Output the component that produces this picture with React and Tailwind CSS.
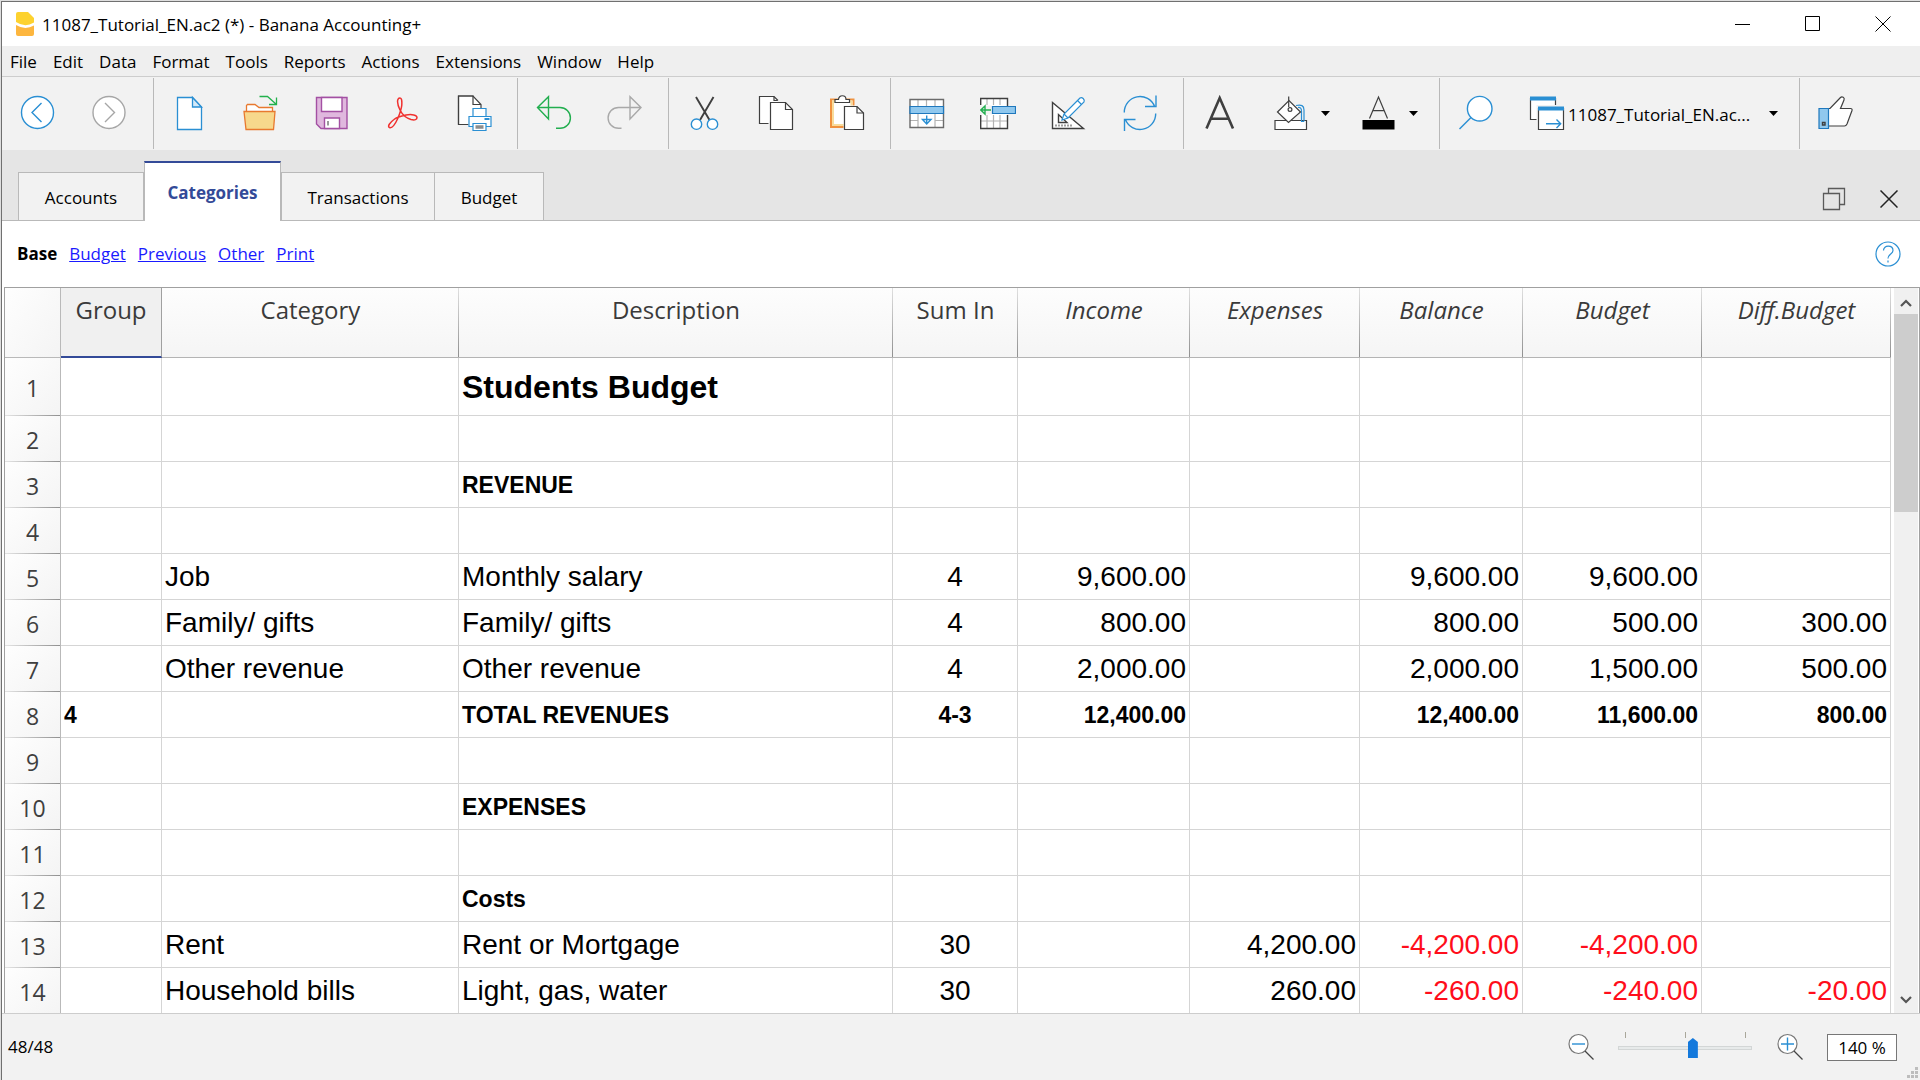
import React from "react";

const BLUE = "#2a8fd3";
const DARK = "#3f3f3f";

function Icon({ children, stroke = DARK, width = 1.2 }) {
  return (
    <svg viewBox="0 0 36 36" className="size-9 shrink-0" fill="none" stroke={stroke} strokeWidth={width} aria-hidden="true">
      {children}
    </svg>
  );
}

const BackIcon = () => (
  <Icon stroke={BLUE} width={1.4}>
    <circle cx="17.5" cy="17.5" r="16" fill="#fff" />
    <path d="M21.5 8 12 17.5 21.5 27" />
  </Icon>
);
const ForwardIcon = () => (
  <Icon stroke="#a6a6a6" width={1.4}>
    <circle cx="18" cy="17.5" r="16" fill="#fff" />
    <path d="M14 8 23.5 17.5 14 27" />
  </Icon>
);
const NewIcon = () => (
  <Icon stroke={BLUE} width={1.3}>
    <path d="M5.5 2.5H20.5L29.5 12V34.5H5.5Z" fill="#fff" />
    <path d="M20.5 2.5V12H29.5Z" fill="#d3e9f8" />
  </Icon>
);
const OpenIcon = () => (
  <Icon stroke="#e8792f" width={1.3}>
    <path d="M3.5 17V10.5L4.5 9.5H12L16 12.5H29.5V17" fill="#fff" />
    <path d="M1 16.5H32L30.5 34.5H3Z" fill="#f7d88c" />
    <path d="M16.5 1.5H24.5L33.5 9.5M33.5 2.5V9.5H26" stroke="#22b14c" />
  </Icon>
);
const SaveIcon = () => (
  <Icon stroke="#a350a3" width={1.4}>
    <path d="M2.5 2.5H33V33.5H7L2.5 29Z" fill="#e0b8de" />
    <path d="M7.5 2.5H28V16.5H7.5Z" fill="#fff" />
    <path d="M10.5 23H25.5V33.5H10.5Z" fill="#fff" />
    <path d="M14 26V30.5" stroke="#9a9a9a" strokeWidth="2" />
  </Icon>
);
const PdfIcon = () => (
  <Icon stroke="#f0312f" width={1.5}>
    <path d="M15 3c-3.500 0-3 6 0 12c2 4 6 8 11 9.500c4 1 6 0 6-2c0-2.500-5-3.500-11-2.500c-5 1-9 2-12 4.500c-4 3-7 7-4.500 8c2.500 1 6-4 8.500-9.500c2-5 3.500-9 3.800-13c.2-4 0-7-1.800-7z" />
  </Icon>
);
const PrintIcon = () => (
  <Icon>
    <path d="M25 14V9.500L17 1H2.500V29.500H12.500" fill="#fff" />
    <path d="M2.500 29.500V1H17V9.500H25" fill="none" />
    <g stroke={BLUE} fill="#fff">
      <path d="M17 13.500H30V21.500H17Z" />
      <path d="M13 21.500H35V31.500H13Z" />
      <path d="M28.500 24H33.500" strokeWidth="2" />
      <path d="M17 28.500H30V35.500H17Z" />
    </g>
    <path d="M19.500 32H27.500" stroke="#8d8d8d" strokeWidth="3.500" />
  </Icon>
);
const UndoIcon = () => (
  <Icon stroke="#22ae4f" width={1.4}>
    <path d="M1.500 12.500 12.500 1.700V24ZM1.500 12.500H24a10.400 10.400 0 0 1 0 20.800h-4" />
  </Icon>
);
const RedoIcon = () => (
  <Icon stroke="#a9a9a9" width={1.4}>
    <path d="M34 12.500 23 1.700V24ZM34 12.500H11.500a10.400 10.400 0 0 0 0 20.800h3" />
  </Icon>
);
const CutIcon = () => (
  <Icon>
    <path d="M9 2 22.500 25M26.500 2 13 25" strokeWidth="1.900" />
    <g stroke={BLUE} strokeWidth="1.400" fill="#fff">
      <circle cx="9.500" cy="29.200" r="5.200" />
      <circle cx="25.500" cy="29.200" r="5.200" />
    </g>
  </Icon>
);
const CopyIcon = () => (
  <Icon>
    <path d="M10.500 28.500H1.500V1.500H16L20 5.500" fill="#fff" />
    <path d="M16 1.500V5.500H19.500" />
    <path d="M12.500 7.500H27.500L34.500 14.500V34.500H12.500Z" fill="#fff" />
    <path d="M27.500 7.500V14.500H34.500" />
  </Icon>
);
const PasteIcon = () => (
  <Icon>
    <path d="M2 4.500H24.500V32H2Z" fill="#fff" stroke="#f0923f" strokeWidth="2" />
    <path d="M4 6.500H22.500V30H4Z" stroke="#f8dc9c" strokeWidth="2" />
    <path d="M6 7.500V4.500H9.500C9.500-.500 17-.500 17 4.500H20.500V7.500Z" fill="#fff" />
    <path d="M14.500 10.500H30V36H14.500Z" fill="#f2f2f2" stroke="none" />
    <path d="M15.500 11.500H28L34.500 18V34.500H15.500Z" fill="#fff" />
    <path d="M28 11.500V18H34.500" />
  </Icon>
);
const AddRowIcon = () => (
  <Icon>
    <path d="M1 4.500H34.500V32.500H1Z" fill="#fff" stroke="none" />
    <path d="M9 5V11M17.500 5V11M26 5V11M9 19V32M26 19V32M1 25.500H9M26 25.500H34" stroke="#b3b3b3" />
    <path d="M1 4.500H34.500V32.500H1Z" stroke="#6b6b6b" strokeWidth="1.400" />
    <path d="M1 11.500H34.500V18.500H1Z" fill="#90c8ee" stroke="#1f78bd" />
    <path d="M17.700 20.500V29M13.500 24.500 17.700 29 22 24.500Z" stroke={BLUE} strokeWidth="1.400" />
  </Icon>
);
const MoveCellIcon = () => (
  <Icon>
    <path d="M.700 3.500H27.500V33.500H.700Z" fill="#fff" stroke="none" />
    <path d="M7 4V10M13.500 4V10M20 4V10M7 20V33M13.500 20V33M20 20V33M1 26H27" stroke="#b3b3b3" />
    <path d="M.700 10V3.500H27.500V11M.700 20V33.500H27.500V20" strokeWidth="1.400" />
    <path d="M0 10.500H12V19.500H0Z" fill="#f2f2f2" stroke="none" />
    <path d="M12.500 11.500H35.500V18.500H12.500Z" fill="#90c8ee" stroke="#1f78bd" />
    <path d="M.800 15H11M5 11 .800 15 5 19Z" stroke="#22ae4f" strokeWidth="1.400" />
  </Icon>
);
const DesignIcon = () => (
  <Icon>
    <path d="M1.500 7.500V33.500H32.500Z" fill="#fff" strokeWidth="1.400" />
    <path d="M7.500 19.500V27.500H16Z" strokeWidth="1.400" />
    <path d="M4.500 30.500H22.500" strokeWidth="2" strokeDasharray="1 2" />
    <g stroke={BLUE} fill="#fff">
      <path d="M11 25 13 19 29 3Q30.500 1.800 32.200 3.500T33 7L17 23Z" />
      <path d="M13 19 17 23M26.500 5.500 30.500 9.500" />
    </g>
  </Icon>
);
const RefreshIcon = () => (
  <Icon stroke={BLUE} width={1.4}>
    <path d="M2.300 17.500A15.700 15.700 0 0 1 32.600 11.500M34 .500V11.500H23" />
    <path d="M33.700 18.500A15.700 15.700 0 0 1 3.400 24.500M2.500 36V24.500H13.500" />
  </Icon>
);
const FontIcon = () => (
  <Icon width={2.6}>
    <path d="M4.500 33.500 17.700 3 31 33.500M9 23.700H26.500" />
  </Icon>
);
const FillIcon = () => (
  <Icon>
    <path d="M2 25.500H33.500V34.500H2Z" fill="#fff" />
    <path d="M23 10.500Q31 8.500 31 15V26.500M25 12.500Q28.500 12 28.500 16V26.500H31" stroke={BLUE} />
    <path d="M4.500 17 16 5.500 27.500 17 15.500 27.500Z" fill="#fff" />
    <path d="M15.700 1.500V12" />
    <circle cx="17" cy="14.500" r="1.900" />
  </Icon>
);
const TextColorIcon = () => (
  <Icon>
    <path d="M8.500 23.500 17.500 2 26.500 23.500M11.500 15.700H23.500" />
    <path d="M1.500 25H33.500V34.500H1.500Z" fill="#000" stroke="none" />
  </Icon>
);
const SearchIcon = () => (
  <Icon stroke={BLUE} width={1.4}>
    <circle cx="21.700" cy="13.700" r="12.300" fill="#fff" />
    <path d="M13 22.500 1.500 34" />
  </Icon>
);
const WindowsIcon = () => (
  <Icon>
    <path d="M1.500 3.500H26.500V24.500H1.500Z" fill="#fff" />
    <path d="M1 3.500H27" stroke={BLUE} strokeWidth="4" />
    <path d="M7.500 10H36V36H7.500Z" fill="#f2f2f2" stroke="none" />
    <path d="M9.500 13.500H34.500V34.500H9.500Z" fill="#fff" />
    <path d="M9 13.500H35" stroke={BLUE} strokeWidth="4" />
    <path d="M17 28.700H31.500M27.500 24.500 31.700 28.700 27.500 33" stroke={BLUE} strokeWidth="1.400" />
  </Icon>
);
const ThumbIcon = () => (
  <Icon>
    <path d="M10 13.500H12L22.500 2.500C24 1 27 2.500 26 5L22.500 13.500H32.500Q34.500 13.500 34 15.500L29 29Q28 31 26.500 31H10Z" fill="#fff" />
    <path d="M1 13.500H10.500V33.500H1Z" fill="#90c8ee" stroke="#1f78bd" />
    <path d="M4.500 27.500H7V30H4.500Z" strokeWidth="1.400" />
  </Icon>
);

const Caret = () => (
  <svg viewBox="0 0 9 5" className="h-[5px] w-[9px] shrink-0" aria-hidden="true">
    <path d="M0 0H9L4.500 5Z" fill="#000" />
  </svg>
);

const toolGroups = [
  [["Back", BackIcon], ["Forward", ForwardIcon]],
  [["New", NewIcon], ["Open", OpenIcon], ["Save", SaveIcon], ["Export PDF", PdfIcon], ["Print", PrintIcon]],
  [["Undo", UndoIcon], ["Redo", RedoIcon]],
  [["Cut", CutIcon], ["Copy", CopyIcon], ["Paste", PasteIcon]],
  [["Add rows", AddRowIcon], ["Insert cells", MoveCellIcon], ["Design", DesignIcon], ["Recalculate", RefreshIcon]],
  [["Font", FontIcon], ["Fill colour", FillIcon, true], ["Text colour", TextColorIcon, true]],
];

const menus = ["File", "Edit", "Data", "Format", "Tools", "Reports", "Actions", "Extensions", "Window", "Help"];

const columns = [
  ["", "w-[56px]"],
  ["Group", "w-[101px]"],
  ["Category", "w-[297px]"],
  ["Description", "w-[434px]"],
  ["Sum In", "w-[125px]"],
  ["Income", "w-[172px]"],
  ["Expenses", "w-[170px]"],
  ["Balance", "w-[163px]"],
  ["Budget", "w-[179px]"],
  ["Diff.Budget", "w-[189px]"],
];

const rows = [
  { kind: "title", cells: ["", "", "Students Budget"] },
  { cells: [] },
  { kind: "bold", cells: ["", "", "REVENUE"] },
  { cells: [] },
  { cells: ["", "Job", "Monthly salary", "4", "9,600.00", "", "9,600.00", "9,600.00", ""] },
  { cells: ["", "Family/ gifts", "Family/ gifts", "4", "800.00", "", "800.00", "500.00", "300.00"] },
  { cells: ["", "Other revenue", "Other revenue", "4", "2,000.00", "", "2,000.00", "1,500.00", "500.00"] },
  { kind: "bold", cells: ["4", "", "TOTAL REVENUES", "4-3", "12,400.00", "", "12,400.00", "11,600.00", "800.00"] },
  { cells: [] },
  { kind: "bold", cells: ["", "", "EXPENSES"] },
  { cells: [] },
  { kind: "bold", cells: ["", "", "Costs"] },
  { cells: ["", "Rent", "Rent or Mortgage", "30", "", "4,200.00", "-4,200.00", "-4,200.00", ""] },
  { cells: ["", "Household bills", "Light, gas, water", "30", "", "260.00", "-260.00", "-240.00", "-20.00"] },
];

const kindClass = {
  title: "h-[58px] text-[32px] font-bold",
  bold: "h-[46px] text-[23px] font-bold",
  normal: "h-[46px] text-[28px]",
};

function alignOf(i) {
  if (i < 3) return "text-left";
  return i === 3 ? "text-center" : "text-right";
}

function TitleBar() {
  return (
    <header className="flex h-11 shrink-0 items-center bg-white pr-0.5 pl-[14px]">
      <svg viewBox="0 0 18 24" className="h-6 w-[18px]" aria-hidden="true">
        <path d="M2 0H12L18 6V10.500Q9 16 0 10V2Q0 0 2 0Z" fill="#fdd22f" />
        <path d="M0 13Q9 18.500 18 13.500V22Q18 24 16 24H2Q0 24 0 22Z" fill="#fdb63e" />
      </svg>
      <h1 className="ml-2 flex-1 pt-px text-[17px] text-black">11087_Tutorial_EN.ac2 (*) - Banana Accounting+</h1>
      <div className="flex h-full">
        <button aria-label="Minimize" className="flex w-[70px] items-center justify-center">
          <svg viewBox="0 0 16 16" className="size-4" stroke="#000"><path d="M0 8.500H15" /></svg>
        </button>
        <button aria-label="Maximize" className="flex w-[70px] items-center justify-center">
          <svg viewBox="0 0 16 16" className="size-4" stroke="#000" fill="none"><path d="M.500 .500H14.500V14.500H.500Z" /></svg>
        </button>
        <button aria-label="Close" className="flex w-[70px] items-center justify-center">
          <svg viewBox="0 0 16 16" className="size-4" stroke="#000"><path d="M.500 .500 15.500 15.500M15.500 .500 .500 15.500" /></svg>
        </button>
      </div>
    </header>
  );
}

function Toolbar() {
  return (
    <div role="toolbar" className="flex h-[74px] shrink-0 border-t border-[#cdcdcd] bg-[#f2f2f2] pt-px pb-px">
      {toolGroups.map((group, g) => (
        <div key={g} className="flex border-r border-[#b9b9b9] pr-2 first:pr-[9px]">
          {group.map(([label, Glyph, caret]) => (
            <button
              key={label}
              aria-label={label}
              className={caret ? "flex w-[88px] items-center gap-3 pl-[18px] pb-px" : "flex w-[71px] items-center justify-center pb-px"}
            >
              <Glyph />
              {caret && <Caret />}
            </button>
          ))}
        </div>
      ))}
      <div className="flex border-r border-[#b9b9b9] pr-2">
        <button aria-label="Search" className="flex w-[71px] items-center justify-center pb-px"><SearchIcon /></button>
        <button className="flex w-[280px] items-center gap-[3px] pr-[13px] pb-px pl-[18px] text-left text-[17px]">
          <WindowsIcon />
          <span className="flex-1 pt-1">11087_Tutorial_EN.ac...</span>
          <Caret />
        </button>
      </div>
      <button aria-label="Feedback" className="flex w-[71px] items-center justify-center pb-px"><ThumbIcon /></button>
    </div>
  );
}

function Tabs() {
  const tab = "h-[49px] border border-[#b9b9b9] bg-[#f2f2f2] pb-[2px] text-[17px] pt-[4px]";
  return (
    <div className="flex h-[71px] shrink-0 items-end border-b border-[#b9b9b9] bg-[#e5e5e5] pr-[22px] pl-4">
      <div role="tablist" className="-mb-px flex flex-1 items-end">
        <button role="tab" className={`${tab} w-[126px]`}>Accounts</button>
        <button role="tab" aria-selected="true" className="h-[60px] w-[137px] border-x border-t-2 border-x-[#b9b9b9] border-t-[#334a98] bg-white pb-[2px] pt-[4px] text-[17px] font-bold text-[#334a98]">
          Categories
        </button>
        <button role="tab" className={`${tab} w-[154px]`}>Transactions</button>
        <button role="tab" className={`${tab} w-[109px] border-l-0`}>Budget</button>
      </div>
      <div className="flex items-center gap-[34px] pb-[9px]">
        <button aria-label="Restore window">
          <svg viewBox="0 0 24 24" className="size-6" fill="none" stroke="#5a5a5a" strokeWidth="1.300">
            <path d="M6.500 6V1.500H22.500V17.500H18" />
            <path d="M1.500 6.500H17.500V22.500H1.500Z" />
          </svg>
        </button>
        <button aria-label="Close table">
          <svg viewBox="0 0 18 18" className="size-[18px]" stroke="#222" strokeWidth="1.500"><path d="M.500 .500 17.500 17.500M17.500 .500 .500 17.500" /></svg>
        </button>
      </div>
    </div>
  );
}

function Grid() {
  return (
    <div className="ml-0.5 flex min-h-0 flex-1 overflow-hidden border-t border-r border-l border-[#a0a0a0] bg-white">
      <div className="min-w-0 flex-1 overflow-hidden pr-[3px]">
        <table id="grid" className="w-full table-fixed border-separate border-spacing-0">
          <thead>
            <tr className="h-[70px] text-[24px] leading-8 text-[#3a3a3a]">
              {columns.map(([name, width], i) => {
                const base = `${width} pt-1.5 align-top font-normal whitespace-nowrap`;
                if (i === 0)
                  return <th key={i} aria-label="Row" className={`${base} border-r border-b border-[#b9b9b9] bg-linear-to-br from-[#fefefe] to-[#f4f4f4]`} />;
                if (i === 1)
                  return <th key={i} className={`${base} border-r border-b-2 border-r-[#a0a0a0] border-b-[#334a98] bg-[#f0f0f0]`}>{name}</th>;
                return (
                  <th
                    key={i}
                    className={`${base} ${i > 4 ? "italic" : ""} border-b border-[#b4b4b4] bg-[linear-gradient(to_bottom,#e0e0e0,#909090),linear-gradient(to_bottom,#fdfdfd,#f5f5f5)] bg-[length:1px_100%,100%_100%] bg-[position:right,left] bg-no-repeat`}
                  >
                    {name}
                  </th>
                );
              })}
            </tr>
          </thead>
          <tbody className="text-black">
            {rows.map((row, r) => (
              <tr key={r} className={kindClass[row.kind || "normal"]}>
                <th
                  scope="row"
                  className="h-[46px] border-r border-[#b9b9b9] bg-[linear-gradient(to_right,#e4e4e4,#909090),linear-gradient(to_bottom_right,#fefefe,#f4f4f4)] bg-[length:100%_1px,100%_100%] bg-[position:bottom,left] bg-no-repeat pt-0.5 text-[23px] leading-8 font-normal text-[#3f3f3f]"
                >
                  {r + 1}
                </th>
                {columns.slice(1).map((_, c) => {
                  const value = row.cells[c] || "";
                  return (
                    <td
                      key={c}
                      className={`border-r border-b border-[#d5d5d5] px-[3px] py-0 font-[Liberation_Sans,Arial,sans-serif] leading-9 whitespace-nowrap ${alignOf(c)} ${value.startsWith("-") ? "text-[#ff0d1b]" : ""}`}
                    >
                      {value}
                    </td>
                  );
                })}
              </tr>
            ))}
          </tbody>
        </table>
      </div>
      <div role="scrollbar" aria-controls="grid" aria-valuenow={0} className="mr-px flex w-6 flex-col bg-[#f0f0f0]">
        <button aria-label="Scroll up" className="flex h-[26px] shrink-0 items-center justify-center">
          <svg viewBox="0 0 12 8" className="mt-1 h-2 w-3" fill="none" stroke="#555" strokeWidth="2.200"><path d="M1 7 6 2 11 7" /></svg>
        </button>
        <div className="h-[198px] bg-[#cdcdcd]" />
        <div className="flex-1" />
        <button aria-label="Scroll down" className="flex h-[26px] shrink-0 items-center justify-center">
          <svg viewBox="0 0 12 8" className="h-2 w-3" fill="none" stroke="#555" strokeWidth="2.200"><path d="M1 1 6 6 11 1" /></svg>
        </button>
      </div>
    </div>
  );
}

function ZoomGlyph({ plus }) {
  return (
    <svg viewBox="0 0 26 28" className="h-7 w-[26px]" fill="none" stroke="#777" strokeWidth="1.200" aria-hidden="true">
      <circle cx="10.500" cy="11" r="9.500" fill="#fff" />
      <path d="M17 18 25.500 26.500" stroke="#444" />
      <path d={plus ? "M4 11H17M10.500 4.500V17.500" : "M4 11H17"} stroke={BLUE} strokeWidth="1.400" />
    </svg>
  );
}

function StatusBar() {
  return (
    <footer className="relative flex h-[67px] shrink-0 items-center border-t border-[#cdcdcd] bg-[#f2f2f2] pr-[23px] pl-1.5 text-[17px] text-black">
      <span className="flex-1">48/48</span>
      <button aria-label="Zoom out"><ZoomGlyph /></button>
      <div className="mr-[25px] ml-6 flex w-[134px] flex-col pb-1">
        <div className="flex h-1.5 justify-between pr-1.5 pl-[7px]">
          <i className="w-px bg-[#a9a79a]" />
          <i className="w-px bg-[#a9a79a]" />
          <i className="w-px bg-[#a9a79a]" />
        </div>
        <input
          type="range"
          min="0"
          max="248"
          defaultValue="140"
          aria-label="Zoom"
          className="block h-5 w-full appearance-none bg-transparent [&::-webkit-slider-runnable-track]:h-1 [&::-webkit-slider-runnable-track]:border [&::-webkit-slider-runnable-track]:border-[#d3d6d6] [&::-webkit-slider-runnable-track]:bg-[#e7eaea] [&::-webkit-slider-thumb]:-mt-[9px] [&::-webkit-slider-thumb]:h-5 [&::-webkit-slider-thumb]:w-2.5 [&::-webkit-slider-thumb]:appearance-none [&::-webkit-slider-thumb]:bg-[#1479dc] [&::-webkit-slider-thumb]:[clip-path:polygon(50%_0,100%_20%,100%_100%,0_100%,0_20%)]"
        />
      </div>
      <button aria-label="Zoom in"><ZoomGlyph plus /></button>
      <input aria-label="Zoom level" defaultValue="140 %" className="ml-6 h-[27px] w-[70px] border border-[#777] bg-white text-center text-[17px]" />
      <svg viewBox="0 0 11 11" className="absolute right-0.5 bottom-0.5 size-[11px]" fill="#bdbdbd" aria-hidden="true">
        <path d="M8 0h3v3H8zM4 4h3v3H4zM8 4h3v3H8zM0 8h3v3H0zM4 8h3v3H4zM8 8h3v3H8z" />
      </svg>
    </footer>
  );
}

export default function App() {
  return (
    <div className="h-screen overflow-hidden bg-[#dedede] pt-px pl-px font-[Open_Sans,Noto_Sans,sans-serif]">
      <div className="flex h-full flex-col overflow-hidden border-t border-l border-[#707070] bg-white text-black">
        <TitleBar />
        <nav className="flex h-[30px] shrink-0 items-center gap-4 bg-[#efefef] pt-0.5 pl-2 text-[17px]">
          {menus.map((m) => (
            <button key={m}>{m}</button>
          ))}
        </nav>
        <Toolbar />
        <Tabs />
        <div className="flex h-[66px] shrink-0 items-center gap-3 bg-white pr-[19px] pl-[15px] text-[17px]">
          <strong className="font-bold">Base</strong>
          {["Budget", "Previous", "Other", "Print"].map((v) => (
            <a key={v} href={`#${v}`} className="text-[#1a1aff] underline">{v}</a>
          ))}
          <button aria-label="Help" className="ml-auto">
            <svg viewBox="0 0 26 26" className="size-[26px]" fill="none" stroke={BLUE} strokeWidth="1.200">
              <circle cx="13" cy="13" r="12" />
              <path d="M8.500 9.500C8.500 3.500 18 4 18 9.500C18 13 13 13 13 17.500M13 19.500V21.500" />
            </svg>
          </button>
        </div>
        <Grid />
        <StatusBar />
      </div>
    </div>
  );
}
